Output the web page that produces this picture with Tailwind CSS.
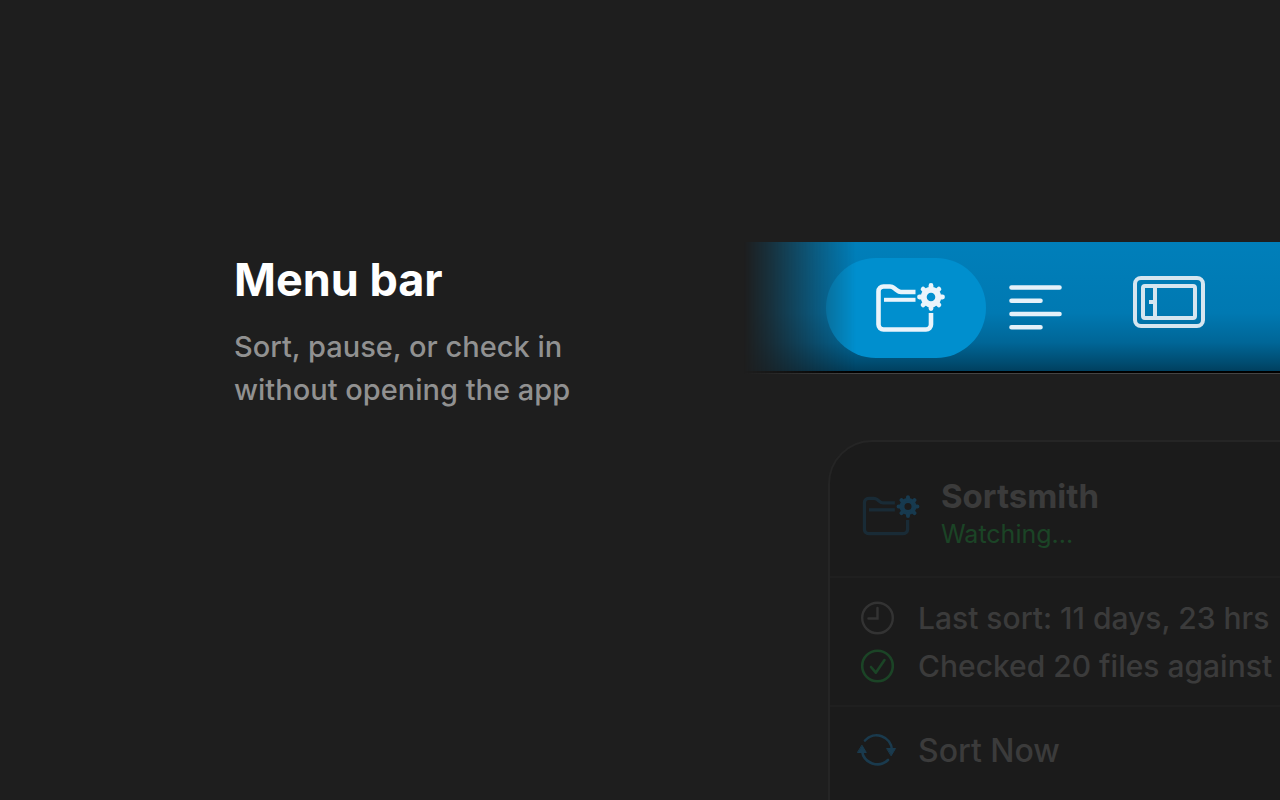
<!DOCTYPE html>
<html lang="en">
<head>
    <meta charset="utf-8">
    <title>Sortsmith - Menu bar</title>
    <meta name="viewport" content="width=device-width, initial-scale=1.0">
    <script src="https://cdn.jsdelivr.net/npm/@tailwindcss/browser@4"></script>
</head>
<body class="bg-[#1e1e1e] text-white font-['Inter',sans-serif]">
    <main class="flex h-screen overflow-hidden pt-[242px]">
        <!-- Caption -->
        <section class="w-[744px] shrink-0 pl-[234px] pt-2">
            <h1 class="text-[45px] leading-[60px] font-bold">Menu bar</h1>
            <p class="mt-[15px] text-[29px] leading-[43px] font-medium text-[#919191]">Sort, pause, or check in<br>without opening the app</p>
        </section>

        <section class="min-w-0 flex-1">
            <!-- Menu bar -->
            <div class="[mask-image:linear-gradient(to_right,transparent,rgb(0_0_0/0.22)_28px,rgb(0_0_0/0.64)_72px,black_112px)]">
                <div class="flex h-[129px] items-start bg-[linear-gradient(to_bottom,#007fba,#0079b2_55%,#006697_78%,#004d72_93%,#00405f)] pt-4 pl-[82px]">
                    <button type="button" aria-label="Sortsmith" class="flex h-[100px] w-40 shrink-0 justify-center rounded-[50px] bg-[#008fce] pt-[22px]">
                        <svg width="74" height="56" viewBox="0 0 74 56" fill="none" stroke="#eaf4fb" stroke-width="4.6" class="ml-1.5">
                            <path d="M43.5 12H29c-2 0-3-.8-4.500-2l-2.500-2c-1.300-1.100-2.500-1.500-4-1.500H11.500a5 5 0 0 0-5 5v33a5 5 0 0 0 5 5H54a5 5 0 0 0 5-5V33" />
                            <path d="M12 19.800h31.500" stroke-width="4" />
                            <circle cx="59" cy="17" r="7.300" stroke-width="6" />
                            <path d="M59 9V5.500M59 25v3.500M51 17h-3.500M67 17h3.500M53.500 11.500l-2.400-2.400M64.500 11.500l2.400-2.400M53.500 22.500l-2.400 2.400M64.500 22.500l2.400 2.400" stroke-width="4.800" stroke-linecap="round" />
                        </svg>
                    </button>
                    <button type="button" aria-label="Text" class="mt-[26px] ml-[22px] shrink-0">
                        <svg width="54" height="48" viewBox="0 0 54 48" fill="none" stroke="#e5f1f9" stroke-width="4.600" stroke-linecap="round">
                            <path d="M3.500 3.500h48M3.500 16.700h29M3.500 30h48M3.500 43.300h29" />
                        </svg>
                    </button>
                    <button type="button" aria-label="Display" class="mt-[17px] ml-[70px] shrink-0">
                        <svg width="74" height="54" viewBox="0 0 74 54" fill="none" stroke="#d5e6f0" stroke-width="4">
                            <rect x="3" y="3" width="68" height="48" rx="6" />
                            <rect x="11" y="11" width="52" height="32" rx="2" />
                            <path d="M23 11v32M17 27h6" />
                        </svg>
                    </button>
                </div>
                <div class="h-0.5 bg-black"></div>
                <div class="h-px bg-[#444444]"></div>
            </div>

            <!-- Dropdown panel -->
            <div class="mt-[66px] ml-[84px] h-[480px] w-[640px] rounded-tl-[44px] border-2 border-[#252525] bg-[#1b1b1b] text-[#3b3b3b]">
                <div class="flex h-[136px] border-b-2 border-[#1f1f1f] pl-[29px]">
                    <svg width="61" height="46" viewBox="0 0 74 56" fill="none" stroke="#192b36" stroke-width="4" class="mt-[51px] shrink-0">
                        <path d="M43.500 12H29c-2 0-3-.8-4.500-2l-2.500-2c-1.300-1.100-2.500-1.500-4-1.500H11.500a5 5 0 0 0-5 5v33a5 5 0 0 0 5 5H54a5 5 0 0 0 5-5V33" />
                        <path d="M12 20.500h31.500" />
                        <g stroke="#173a4f">
                            <circle cx="59.500" cy="16.500" r="7.300" stroke-width="6" />
                            <path d="M59.500 8.500V5M59.500 24.500v3.500M51.500 16.500h-3.500M67.500 16.500h3.500M54 11l-2.400-2.400M65 11l2.400-2.400M54 22l-2.400 2.400M65 22l2.400 2.400" stroke-width="4.800" stroke-linecap="round" />
                        </g>
                    </svg>
                    <div class="mt-[34px] ml-[21px]">
                        <h2 class="text-[33px] leading-10 font-bold">Sortsmith</h2>
                        <p class="text-[25px] leading-9 text-[#1b4426]">Watching...</p>
                    </div>
                </div>
                <ul class="h-[129px] border-b-2 border-[#1f1f1f] pt-4 text-[30px] leading-12 font-medium whitespace-nowrap">
                    <li class="flex items-center gap-[22px] pl-[29px]">
                        <svg width="37" height="37" viewBox="0 0 37 37" fill="none" stroke="#333333" stroke-width="2.400" class="shrink-0">
                            <circle cx="18.500" cy="18" r="15.300" />
                            <path d="M18.500 8v10.500H9.500" stroke-linecap="round" />
                        </svg>
                        Last sort: 11 days, 23 hrs
                    </li>
                    <li class="flex items-center gap-[22px] pl-[29px]">
                        <svg width="37" height="37" viewBox="0 0 37 37" fill="none" stroke="#1b4426" stroke-width="2.600" class="shrink-0">
                            <circle cx="18.500" cy="18" r="15.300" />
                            <path d="M12 19l4.800 5.700L25.500 12" stroke-linecap="round" stroke-linejoin="round" />
                        </svg>
                        Checked 20 files against
                    </li>
                </ul>
                <button type="button" class="mt-5 flex items-center gap-[22px] pl-[27px] text-[32px] leading-12 font-medium">
                    <svg width="39" height="37" viewBox="0 0 39 37" fill="none" stroke="#1a3a4d" stroke-width="2.600" stroke-linecap="round" class="shrink-0">
                        <path d="M8 7.500A15.500 15.500 0 0 1 35 17M31 27A15.500 15.500 0 0 1 5 18" />
                        <path d="M30 15.500h8.500l-4.200 7zM.8 19.500h8.500l-4.200-7z" fill="#1a3a4d" stroke-width="1" />
                    </svg>
                    Sort Now
                </button>
            </div>
        </section>
    </main>
</body>
</html>
